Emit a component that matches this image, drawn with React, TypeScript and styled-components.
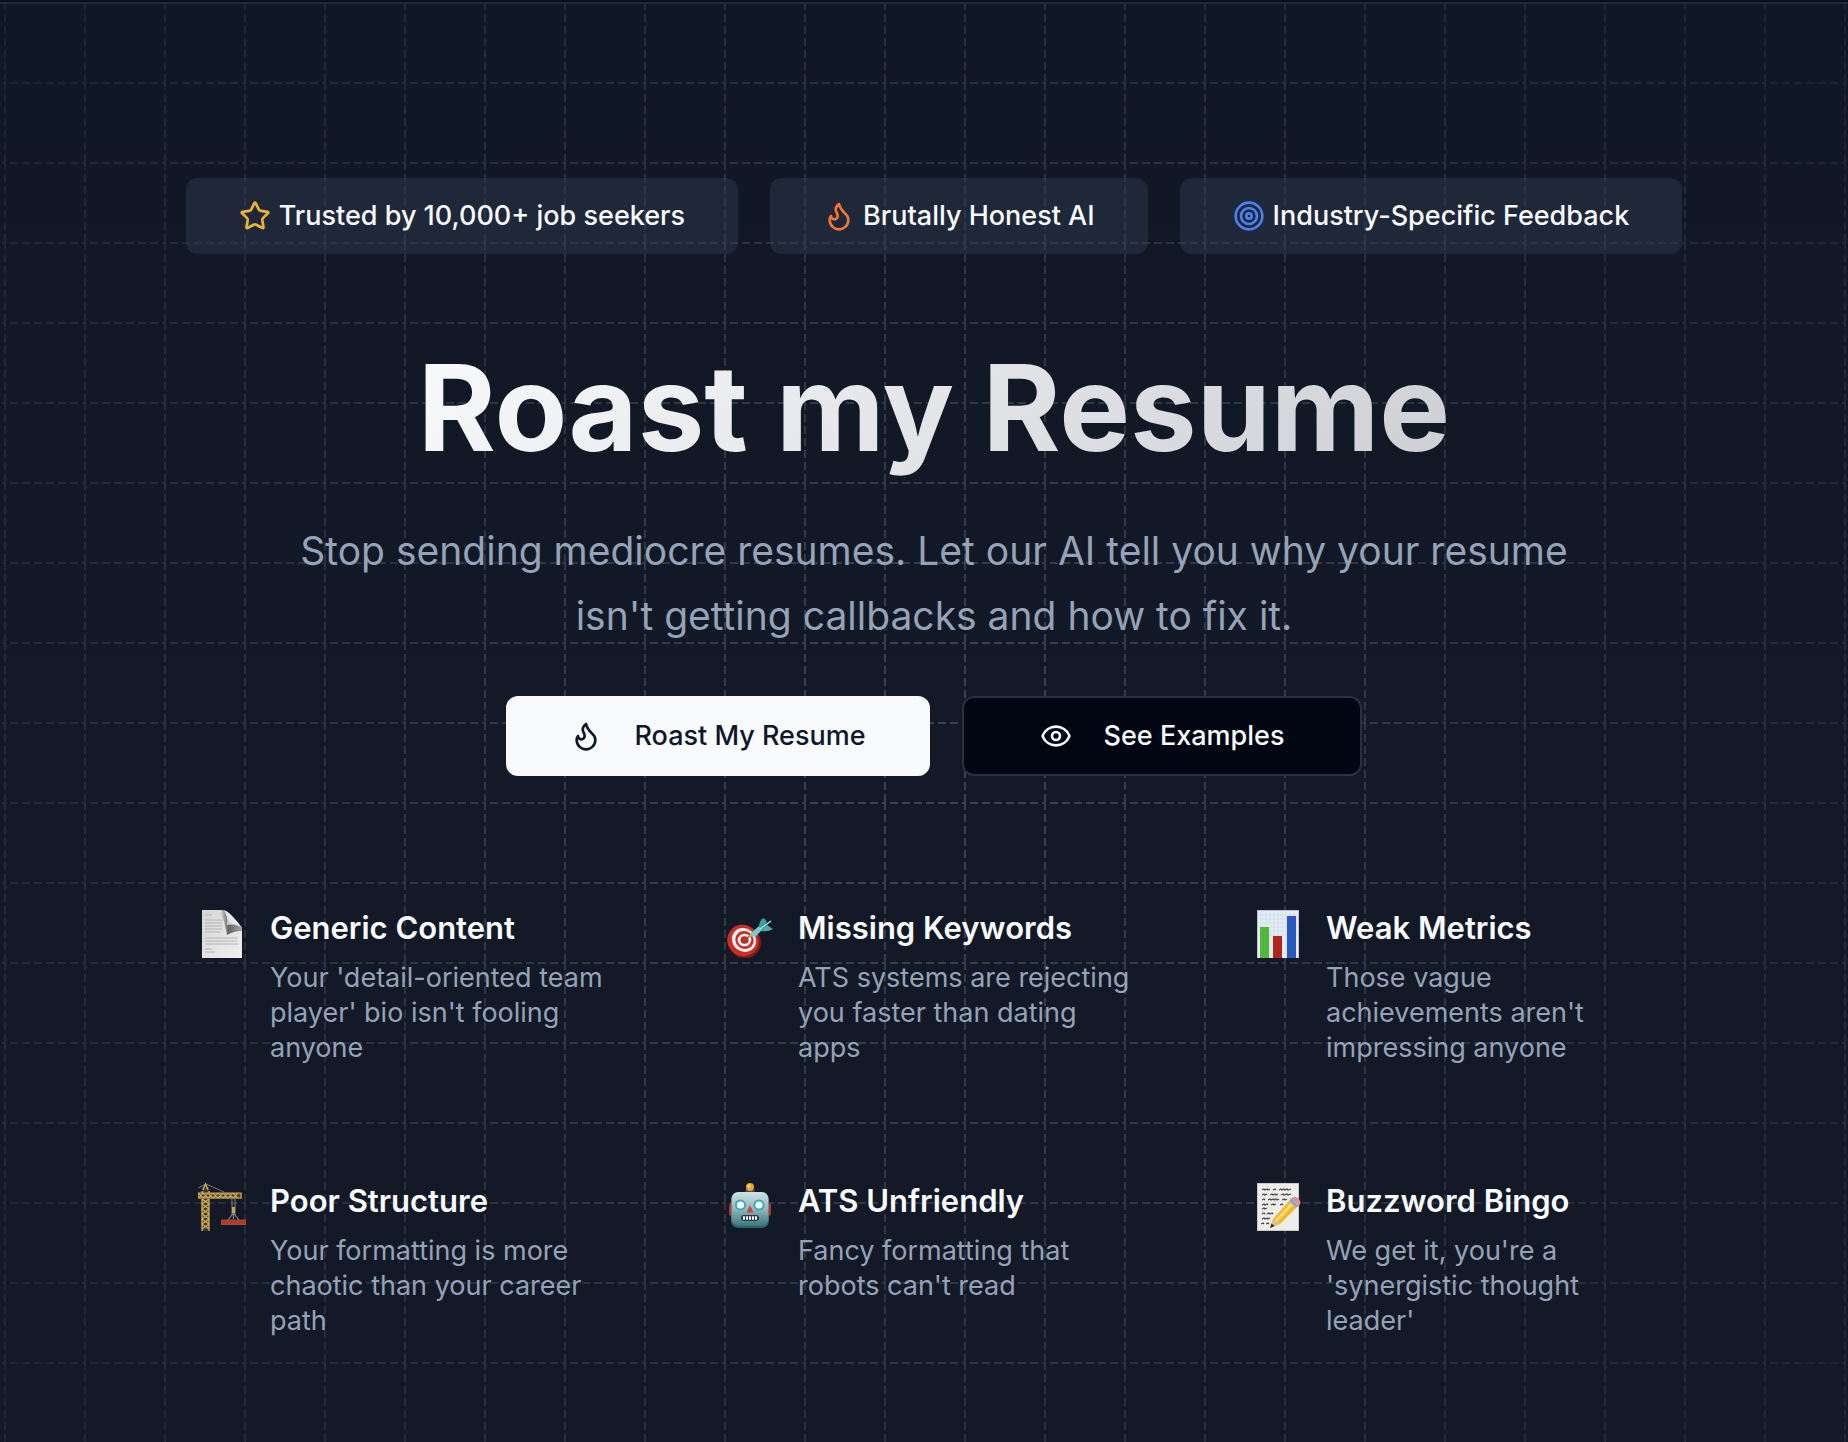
import React from "react";
import styled, { createGlobalStyle } from "styled-components";
import { Eye, Flame, Star, Target } from "lucide-react";

const color = {
  hero: "#121826",
  line: "#1e293b",
  text: "#f8fafc",
  muted: "#94a3b8",
  ink: "#0f172a",
};

const GlobalStyle = createGlobalStyle`
  *, *::before, *::after { box-sizing: border-box; }
  body {
    margin: 0;
    background: ${color.hero};
    color: ${color.text};
    font-family: Inter, "Liberation Sans", sans-serif;
    -webkit-font-smoothing: antialiased;
  }
`;

const TopEdge = styled.div`
  height: 2px;
  background: #0a0f1c;
`;

const Hero = styled.main`
  position: relative;
  display: flex;
  flex-direction: column;
  align-items: center;
  min-height: calc(100vh - 2px);
  padding: 174px 0 80px 20px;
  border-top: 2px solid ${color.line};
  background: linear-gradient(#111825, #141927);
  overflow: hidden;
`;

const Grid = styled.svg`
  position: absolute;
  inset: 0;
  width: 100%;
  height: 100%;
  mask-image: radial-gradient(1600px circle at center, #fff, transparent);
`;

const Badges = styled.ul`
  position: relative;
  display: flex;
  flex-wrap: wrap;
  justify-content: center;
  gap: 32px;
  margin: 0 0 80px;
  padding: 0;
  list-style: none;
`;

const Badge = styled.li`
  display: flex;
  align-items: center;
  gap: 8px;
  height: 76px;
  padding: 0 53px;
  border-radius: 12px;
  background: rgba(53, 65, 87, 0.4);
  font-size: 27px;
  font-weight: 500;
  line-height: 40px;
`;

const Title = styled.h1`
  position: relative;
  margin: 0;
  font-size: 119px;
  font-weight: 700;
  line-height: 148px;
  text-align: center;
  color: transparent;
  background: linear-gradient(135deg, #f8fafc, #cdcfd3);
  background-clip: text;
  -webkit-background-clip: text;
`;

const Lead = styled.p`
  position: relative;
  max-width: 1312px;
  margin: 36px 0 48px;
  color: ${color.muted};
  font-size: 39px;
  line-height: 65px;
  text-align: center;
`;

const Actions = styled.div`
  position: relative;
  display: flex;
  flex-wrap: wrap;
  justify-content: center;
  gap: 32px;
  margin-bottom: 112px;
`;

const Action = styled.button<{ $primary?: boolean }>`
  display: flex;
  align-items: center;
  justify-content: center;
  gap: 32px;
  min-width: ${(p) => (p.$primary ? 424 : 400)}px;
  height: 80px;
  padding: 0 48px;
  border: 2px solid ${(p) => (p.$primary ? color.text : "#2c2f40")};
  border-radius: 12px;
  background: ${(p) => (p.$primary ? color.text : "#020613")};
  color: ${(p) => (p.$primary ? color.ink : color.text)};
  font-family: inherit;
  font-size: 27px;
  font-weight: 500;
  line-height: 40px;
  cursor: pointer;
`;

const Features = styled.section`
  position: relative;
  display: grid;
  grid-template-columns: repeat(3, minmax(0, 1fr));
  gap: 0 16px;
  width: 100%;
  max-width: 1568px;
`;

const Feature = styled.article`
  display: flex;
  align-items: flex-start;
  gap: 24px;
  min-height: 273px;
  padding: 16px 48px 0;
`;

const Emoji = styled.svg`
  flex: none;
  width: 48px;
  height: 60px;
`;

const FeatureTitle = styled.h2`
  margin: 0 0 8px;
  font-size: 31px;
  font-weight: 600;
  line-height: 48px;
`;

const FeatureText = styled.p`
  margin: 0;
  color: ${color.muted};
  font-size: 27px;
  line-height: 35px;
`;

const PageArt = () => (
  <Emoji viewBox="0 0 48 60" aria-hidden="true">
    <defs>
      <linearGradient id="sheet" x1="0" y1="0" x2="1" y2="1">
        <stop offset="0" stopColor="#d6d6d6" />
        <stop offset="1" stopColor="#efefef" />
      </linearGradient>
      <linearGradient id="fold" x1="0" y1="0" x2="1" y2="0">
        <stop offset="0" stopColor="#444" stopOpacity="0" />
        <stop offset="0.4" stopColor="#444" stopOpacity=".8" />
        <stop offset="1" stopColor="#777" stopOpacity=".6" />
      </linearGradient>
      <linearGradient id="curl" x1="0" y1="1" x2="1" y2="0">
        <stop offset="0" stopColor="#999" />
        <stop offset="0.4" stopColor="#e4e4e4" />
        <stop offset="1" stopColor="#fff" />
      </linearGradient>
    </defs>
    <path d="M4 6H25Q29 7 32 11L44 24V54H4Z" fill="url(#sheet)" />
    <path d="M7 11h7M7 16h18M7 19h17M7 22h18M7 25h17M7 28h15M7 34h33M7 37h32M7 40h33M7 45h7M7 48h10" stroke="#b4b4b4" strokeWidth="1" />
    <path d="M22 6H26L44 24V27Q36 27 29 31Q27 18 22 6Z" fill="url(#fold)" />
    <path d="M26 6Q30 12 29 21Q38 19 44 24Q41 19 36 14Q31 8 26 6Z" fill="url(#curl)" />
  </Emoji>
);

const DartArt = () => (
  <Emoji viewBox="0 0 48 60" aria-hidden="true">
    <ellipse cx="19" cy="38.5" rx="16" ry="15.5" fill="#7d1c1a" />
    <ellipse cx="17" cy="36.5" rx="16" ry="15.5" fill="#c92f28" transform="rotate(40 17 36.5)" />
    <ellipse cx="18" cy="36" rx="12.500" ry="11.500" fill="#f6f1f0" transform="rotate(40 18 36)" />
    <ellipse cx="18.500" cy="36" rx="9.500" ry="8.800" fill="#c92f28" transform="rotate(40 18.5 36)" />
    <ellipse cx="18.500" cy="36" rx="6.800" ry="6.300" fill="#f6f1f0" />
    <ellipse cx="18.500" cy="36" rx="4" ry="3.800" fill="#b92b26" />
    <path d="M19 36L26 30" stroke="#8c5b20" strokeWidth="1.500" />
    <path d="M23 33L25 28L29 32Z" fill="#e0b43c" />
    <path d="M25 29L33 22L37 25L30 32Q25 34 25 29Z" fill="#6fcbd0" />
    <path d="M33 23Q33 16 38 14L41 18L35 25Z" fill="#3d9ea8" />
    <path d="M35 25L41 21L47 25Q42 28 36 27Z" fill="#4aa9b2" />
    <path d="M34 25L45 17" stroke="#9be0e2" strokeWidth="1.500" />
  </Emoji>
);

const ChartArt = () => (
  <Emoji viewBox="0 0 48 60" aria-hidden="true">
    <rect x="3" y="6" width="42" height="48" fill="#b9c3cd" />
    <rect x="4" y="7" width="40" height="47" fill="#e6edf4" />
    <path d="M4 11h40M4 15h40M4 19h40M4 23h40M4 27h40M4 31h40M8 7v47M12 7v47M16 7v47M20 7v47M24 7v47M28 7v47M32 7v47M36 7v47M40 7v47" stroke="#c8d8e8" strokeWidth=".6" />
    <rect x="6" y="23" width="9" height="31" fill="#50b83b" />
    <rect x="19" y="32" width="9" height="22" fill="#b3241b" />
    <rect x="33" y="12" width="9" height="42" fill="#2759c0" />
  </Emoji>
);

const CraneArt = () => (
  <Emoji viewBox="0 0 48 60" aria-hidden="true">
    <path d="M0 11L8 7L26 15" fill="none" stroke="#777a80" strokeWidth="1" />
    <rect x="4" y="10" width="7" height="44" fill="#3b3930" />
    <path d="M4 14V54M11 14V54M5 13L7.500 7L10 13M4 22l7 5-7 5 7 5-7 5 7 5-7 5M11 22l-7 5 7 5-7 5 7 5-7 5 7 5" fill="none" stroke="#cfa953" strokeWidth="1.400" />
    <rect x="0" y="16" width="44" height="6" fill="#4a4330" />
    <path d="M0 16H43V21H0ZM0 16l5 5 5-5 5 5 5-5 5 5 5-5 5 5 5-5M0 21l5-5 5 5 5-5 5 5 5-5 5 5 5-5 5 5" fill="none" stroke="#cfa953" strokeWidth="1.200" />
    <path d="M34 22V38M37 22V38" stroke="#85878a" strokeWidth="1" />
    <rect x="34" y="30" width="3" height="6" fill="#c8ab3d" />
    <path d="M35.500 36L30 43M35.500 36L41 43M35.500 36V42" stroke="#85878a" strokeWidth="1.200" />
    <rect x="23" y="43" width="25" height="5" fill="#b43a22" />
    <path d="M23 43H48M23 47.500H48" stroke="#8b5b4a" strokeWidth=".8" />
  </Emoji>
);

const RobotArt = () => (
  <Emoji viewBox="0 0 48 60" aria-hidden="true">
    <defs>
      <linearGradient id="metal" x1="0" y1="0" x2="0" y2="1">
        <stop offset="0" stopColor="#cfe3e4" />
        <stop offset="0.5" stopColor="#91b6bb" />
        <stop offset="1" stopColor="#3c7681" />
      </linearGradient>
    </defs>
    <rect x="3" y="26" width="6" height="13" rx="2" fill="#b82f2b" />
    <rect x="39" y="26" width="6" height="13" rx="2" fill="#b82f2b" />
    <ellipse cx="24" cy="14" rx="5" ry="3" fill="#514263" />
    <circle cx="24" cy="10" r="4" fill="#efa52c" />
    <circle cx="23" cy="9" r="1.500" fill="#ffe08a" />
    <rect x="5" y="15" width="38" height="36" rx="7" fill="#2f6069" />
    <rect x="5.500" y="15" width="37" height="34" rx="7" fill="url(#metal)" />
    <circle cx="14.500" cy="28" r="5.500" fill="#3da6c6" />
    <circle cx="33" cy="28" r="5.500" fill="#3da6c6" />
    <circle cx="14.500" cy="28" r="3.600" fill="#f2feff" />
    <circle cx="33" cy="28" r="3.600" fill="#f2feff" />
    <path d="M24 28L27.500 35.500H20.500Z" fill="#c9453d" />
    <rect x="15" y="38" width="18" height="6" rx="3" fill="#233c45" />
    <path d="M17 41H31" stroke="#f5f5f5" strokeWidth="3.500" strokeDasharray="2 1" />
  </Emoji>
);

const MemoArt = () => (
  <Emoji viewBox="0 0 48 60" aria-hidden="true">
    <rect x="3" y="6" width="42" height="48" fill="#c9c9c9" />
    <rect x="4" y="7" width="40" height="46" fill="#ededec" />
    <path d="M8 13l2-1 1 1 2-1 1 1 2-1M19 13l2-1 1 1M25 13l2-1 1 1 2-1 1 1 2-1 1 1 3-1M8 18l2-1 1 1 2-1M16 18l2-1 1 1 2-1 1 1 2-1M27 18l2-1 1 1 3-1 1 1 3-1M8 23l2-1 1 1M14 23l2-1 1 1 2-1 1 1 2-1 1 1 2-1M28 23l2-1 1 1 2-1M8 28l2-1 1 1 2-1 1 1M17 28l2-1 1 1 2-1M26 28l2-1 1 1M8 32l2-1 1 1 2-1M8 37l2-1 1 1M13 37l2-1 1 1 2-1 1 1M8 42l2-1 1 1 2-1 1 1 2-1M7 47l2-1 1 1M12 47l2-1 1 1" fill="none" stroke="#444" strokeWidth="1.100" />
    <path d="M16 51L19 42L35 24L42 31L26 47Z" fill="#edb92f" />
    <path d="M22 44L38 27" stroke="#ffdb6a" strokeWidth="3" />
    <path d="M16 51L19 42L26 47Z" fill="#e5bf91" />
    <path d="M16 51L17.500 46.500L20.500 49Z" fill="#2b2724" />
    <path d="M35 24L37 21L44.500 28.500L42 31Z" fill="#8fa5bd" />
    <path d="M37 21L39 20Q42 19 45 22Q48 26 45 28.500Z" fill="#e58d91" />
  </Emoji>
);

const features = [
  { art: PageArt, title: "Generic Content", text: "Your 'detail-oriented team player' bio isn't fooling anyone" },
  { art: DartArt, title: "Missing Keywords", text: "ATS systems are rejecting you faster than dating apps" },
  { art: ChartArt, title: "Weak Metrics", text: "Those vague achievements aren't impressing anyone" },
  { art: CraneArt, title: "Poor Structure", text: "Your formatting is more chaotic than your career path" },
  { art: RobotArt, title: "ATS Unfriendly", text: "Fancy formatting that robots can't read" },
  { art: MemoArt, title: "Buzzword Bingo", text: "We get it, you're a 'synergistic thought leader'" },
];

export default function App() {
  return (
    <>
      <GlobalStyle />
      <TopEdge />
      <Hero>
        <Grid aria-hidden="true">
          <defs>
            <pattern id="grid" x="4" y="-2" width="80" height="80" patternUnits="userSpaceOnUse">
              <path d="M1 80V1H80" fill="none" stroke="#9ca3af" strokeOpacity=".3" strokeWidth="2" strokeDasharray="8 4" />
            </pattern>
          </defs>
          <rect width="100%" height="100%" fill="url(#grid)" />
        </Grid>

        <Badges>
          <Badge><Star size={32} color="#eab334" aria-hidden />Trusted by 10,000+ job seekers</Badge>
          <Badge><Flame size={32} color="#f0782f" aria-hidden />Brutally Honest AI</Badge>
          <Badge><Target size={32} color="#4a80f0" aria-hidden />Industry-Specific Feedback</Badge>
        </Badges>

        <Title>Roast my Resume</Title>
        <Lead>Stop sending mediocre resumes. Let our AI tell you why your resume isn't getting callbacks and how to fix it.</Lead>

        <Actions>
          <Action type="button" $primary><Flame size={32} aria-hidden />Roast My Resume</Action>
          <Action type="button"><Eye size={32} aria-hidden />See Examples</Action>
        </Actions>

        <Features>
          {features.map(({ art: Art, title, text }) => (
            <Feature key={title}>
              <Art />
              <div>
                <FeatureTitle>{title}</FeatureTitle>
                <FeatureText>{text}</FeatureText>
              </div>
            </Feature>
          ))}
        </Features>
      </Hero>
    </>
  );
}
